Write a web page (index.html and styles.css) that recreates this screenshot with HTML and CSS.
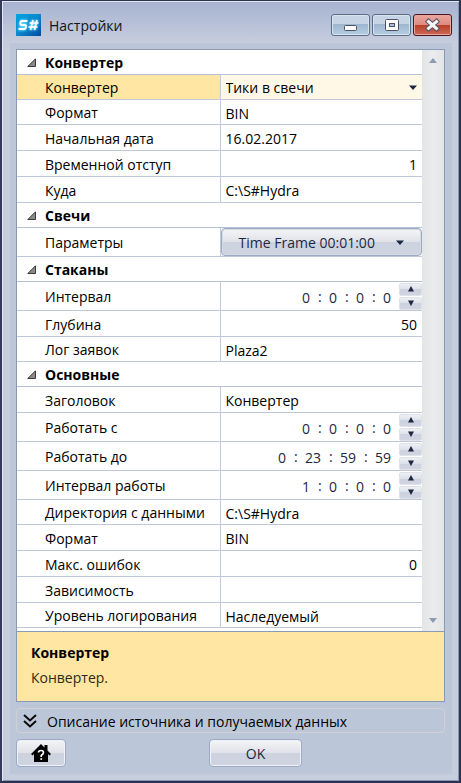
FILE: index.html
```html
<!DOCTYPE html>
<html lang="ru">
<head>
<meta charset="utf-8">
<meta name="viewport" content="width=device-width, initial-scale=1">
<title>Настройки</title>
<link rel="stylesheet" href="styles.css">
</head>
<body>
<div class="window">
  <header class="titlebar">
    <svg class="logo" viewBox="0 0 25 22" aria-hidden="true">
      <defs><linearGradient id="lg" x1="0" y1="0" x2="1" y2="1"><stop offset="0" stop-color="#00a5e3"/><stop offset=".5" stop-color="#0b86cc"/><stop offset="1" stop-color="#004a9c"/></linearGradient>
      <filter id="glow" x="-20%" y="-40%" width="140%" height="180%"><feGaussianBlur stdDeviation="1"/></filter></defs>
      <rect width="25" height="22" fill="url(#lg)"/>
      <g fill="none" stroke="#6fdcff" stroke-width="3" filter="url(#glow)"><path d="M11 7H5.500L4.500 11H9.500L8.500 15H2.500M14 9H22M13 13H21M17 6L14.500 16M21 6L18.500 16"/></g>
      <path fill="none" stroke="#fff" stroke-width="1.800" d="M11.500 7H6Q4.500 7 4.300 9T5.800 11H9Q10.300 11 10 13T8 15H2.500"/>
      <path fill="none" stroke="#fff" stroke-width="1.600" d="M13.500 9H22.500M12.500 13H21.500M17 6L14.500 16M21 6L18.500 16"/>
    </svg>
    <h1 class="title">Настройки</h1>
    <div class="captions">
      <button class="caption" aria-label="Свернуть"><svg viewBox="0 0 37 20"><rect x="12.500" y="10.500" width="12" height="5" rx="1" fill="#fafafa" stroke="#4d5161"/></svg></button>
      <button class="caption" aria-label="Развернуть"><svg viewBox="0 0 37 20"><rect x="12.500" y="4.500" width="13" height="11" rx="1" fill="#fafafa" stroke="#4d5161"/><rect x="16.500" y="8.500" width="5" height="3" fill="#a9c1d9" stroke="#4d5161"/></svg></button>
      <button class="caption close" aria-label="Закрыть"><svg viewBox="0 0 37 20"><path d="M14.500 6.500L22.500 13.500M22.500 6.500L14.500 13.500" stroke="#505365" stroke-width="5" stroke-linecap="square"/><path d="M14.500 6.500L22.500 13.500M22.500 6.500L14.500 13.500" stroke="#f6f6f6" stroke-width="3" stroke-linecap="square"/></svg></button>
    </div>
  </header>
  <main class="client">
    <section class="panel">
      <div class="viewport">
        <div class="grid">
          <button class="group" aria-expanded="true"><svg class="tri" viewBox="0 0 9 9"><path d="M8.500 .8V8.500H.8Z" fill="#8a8a8a" stroke="#3a3a3a"/></svg>Конвертер</button>
          <div class="row selected"><label for="conv">Конвертер</label><div class="value"><select id="conv" class="field"><option>Тики в свечи</option></select><svg class="drop" viewBox="0 0 8 5"><path d="M0 .5H8L4 5Z" fill="#1e2742"/></svg></div></div>
          <div class="row"><label for="fmt">Формат</label><div class="value"><input id="fmt" class="field" value="BIN"></div></div>
          <div class="row tall"><label for="date">Начальная дата</label><div class="value"><input id="date" class="field" value="16.02.2017"></div></div>
          <div class="row tall"><label for="shift">Временной отступ</label><div class="value"><input id="shift" class="field number" value="1"></div></div>
          <div class="row tall"><label for="dest">Куда</label><div class="value"><input id="dest" class="field" value="C:\S#Hydra"></div></div>
          <button class="group" aria-expanded="true"><svg class="tri" viewBox="0 0 9 9"><path d="M8.500 .8V8.500H.8Z" fill="#8a8a8a" stroke="#3a3a3a"/></svg>Свечи</button>
          <div class="row spin"><label for="params">Параметры</label><div class="value wide"><button id="params" class="button params">Time Frame 00:01:00<svg class="arrow" viewBox="0 0 8 5"><path d="M0 .5H8L4 5Z" fill="#1e2742"/></svg></button></div></div>
          <button class="group" aria-expanded="true"><svg class="tri" viewBox="0 0 9 9"><path d="M8.500 .8V8.500H.8Z" fill="#8a8a8a" stroke="#3a3a3a"/></svg>Стаканы</button>
          <div class="row spin"><label for="int">Интервал</label><div class="value time"><input id="int" class="part" value="0"><span>:</span><input class="part" aria-label="Часы" value="0"><span>:</span><input class="part" aria-label="Минуты" value="0"><span>:</span><input class="part" aria-label="Секунды" value="0"><div class="steps"><button class="step" aria-label="Больше"><svg viewBox="0 0 6 6"><path d="M0 5.500L3 0L6 5.500Z"/></svg></button><button class="step" aria-label="Меньше"><svg viewBox="0 0 6 6"><path d="M0 .5L3 6L6 .5Z"/></svg></button></div></div></div>
          <div class="row tall"><label for="depth">Глубина</label><div class="value"><input id="depth" class="field number" value="50"></div></div>
          <div class="row"><label for="log">Лог заявок</label><div class="value"><input id="log" class="field" value="Plaza2"></div></div>
          <button class="group" aria-expanded="true"><svg class="tri" viewBox="0 0 9 9"><path d="M8.500 .8V8.500H.8Z" fill="#8a8a8a" stroke="#3a3a3a"/></svg>Основные</button>
          <div class="row tall"><label for="head">Заголовок</label><div class="value"><input id="head" class="field" value="Конвертер"></div></div>
          <div class="row spin"><label for="from">Работать с</label><div class="value time"><input id="from" class="part" value="0"><span>:</span><input class="part" aria-label="Часы" value="0"><span>:</span><input class="part" aria-label="Минуты" value="0"><span>:</span><input class="part" aria-label="Секунды" value="0"><div class="steps"><button class="step" aria-label="Больше"><svg viewBox="0 0 6 6"><path d="M0 5.500L3 0L6 5.500Z"/></svg></button><button class="step" aria-label="Меньше"><svg viewBox="0 0 6 6"><path d="M0 .5L3 6L6 .5Z"/></svg></button></div></div></div>
          <div class="row spin"><label for="till">Работать до</label><div class="value time"><input id="till" class="part" value="0"><span>:</span><input class="part double" aria-label="Часы" value="23"><span>:</span><input class="part double" aria-label="Минуты" value="59"><span>:</span><input class="part double" aria-label="Секунды" value="59"><div class="steps"><button class="step" aria-label="Больше"><svg viewBox="0 0 6 6"><path d="M0 5.500L3 0L6 5.500Z"/></svg></button><button class="step" aria-label="Меньше"><svg viewBox="0 0 6 6"><path d="M0 .5L3 6L6 .5Z"/></svg></button></div></div></div>
          <div class="row spin"><label for="work">Интервал работы</label><div class="value time"><input id="work" class="part" value="1"><span>:</span><input class="part" aria-label="Часы" value="0"><span>:</span><input class="part" aria-label="Минуты" value="0"><span>:</span><input class="part" aria-label="Секунды" value="0"><div class="steps"><button class="step" aria-label="Больше"><svg viewBox="0 0 6 6"><path d="M0 5.500L3 0L6 5.500Z"/></svg></button><button class="step" aria-label="Меньше"><svg viewBox="0 0 6 6"><path d="M0 .5L3 6L6 .5Z"/></svg></button></div></div></div>
          <div class="row"><label for="dir">Директория с данными</label><div class="value"><input id="dir" class="field" value="C:\S#Hydra"></div></div>
          <div class="row tall"><label for="fmt2">Формат</label><div class="value"><input id="fmt2" class="field" value="BIN"></div></div>
          <div class="row tall"><label for="err">Макс. ошибок</label><div class="value"><input id="err" class="field number" value="0"></div></div>
          <div class="row tall"><label for="dep">Зависимость</label><div class="value"><input id="dep" class="field" value=""></div></div>
          <div class="row"><label for="level">Уровень логирования</label><div class="value"><input id="level" class="field" value="Наследуемый"></div></div>
        </div>
        <div class="scrollbar"><svg viewBox="0 0 8 5"><path d="M0 5L4 0L8 5Z"/></svg><svg viewBox="0 0 8 5"><path d="M0 0H8L4 5Z"/></svg></div>
      </div>
      <div class="help">
        <h2>Конвертер</h2>
        <p>Конвертер.</p>
      </div>
    </section>
    <button class="expander" aria-expanded="false"><svg viewBox="0 0 14 14"><path d="M1 1L7 6.500L13 1M1 7L7 12.500L13 7" fill="none" stroke="#0a0a0a" stroke-width="2"/></svg>Описание источника и получаемых данных</button>
    <footer class="actions">
      <button class="button home" aria-label="Справка"><svg viewBox="0 0 20 18"><path d="M0 10L10 0L13.500 3.500V1H16.500V6.500L20 10L18.500 11.500L17 10V18H3V10L1.500 11.500Z" fill="#000"/><path d="M7.500 8.500Q7.500 6.500 10 6.500T12.500 8.500Q12.500 10 10.200 11.500V13" fill="none" stroke="#fff" stroke-width="1.600"/><rect x="9.400" y="14.200" width="1.700" height="1.700" fill="#fff"/></svg></button>
      <button class="button ok">OK</button>
    </footer>
  </main>
</div>
</body>
</html>
```
FILE: styles.css
```css
* { box-sizing: border-box; }
body { margin: 0; font: 14px/20px "Segoe UI", "Open Sans", "Noto Sans", sans-serif; color: #000; }
button, input, select { font: inherit; color: inherit; margin: 0; padding: 0; border: 0; background: none; border-radius: 0; }
svg { display: block; flex: none; }

.window {
  min-height: 100vh;
  display: flex;
  flex-direction: column;
  padding: 0 7px 7px 8px;
  border: 2px solid #2a3350;
  border-top-width: 1px;
  border-left-color: #343b58;
  background: linear-gradient(#a6b2d0, #c6cddd 42px);
  box-shadow: inset 1px 1px #e2e6ef, inset -1px -1px #8695b5;
}

.titlebar { display: flex; align-items: center; height: 42px; padding: 6px 0 0 6px; gap: 8px; }
.logo { width: 25px; height: 22px; }
.title { flex: 1; margin: 0; padding-top: 2px; font-size: 14px; font-weight: 400; color: #10131c; }
.captions { display: flex; gap: 2px; }
.caption {
  width: 39px;
  height: 22px;
  border: 1px solid #5b6d88;
  border-radius: 3px;
  background: linear-gradient(#c7d4e5 45%, #9db6cf 45%, #b5cde0);
  box-shadow: inset 0 0 0 1px #d9e4ef;
}
.caption svg { width: 37px; height: 20px; }
.caption.close {
  border-color: #4b1420;
  background: linear-gradient(#eaa89e, #de8b80 48%, #b93c25 48%, #cc6a55);
  box-shadow: inset 0 0 0 1px #e8a79c;
}

.client { flex: 1; display: flex; flex-direction: column; padding: 6px 7px 7px 6px; background: #bbc7d8; }
.panel { flex: 1; display: flex; flex-direction: column; border: 1px solid #8b9ab3; background: #fff; }
.viewport { display: flex; }
.grid { flex: 1; min-width: 0; padding-bottom: 3px; }

.group {
  display: flex;
  align-items: center;
  width: 100%;
  height: 25px;
  padding: 2px 0 0 10px;
  gap: 9px;
  border-bottom: 1px solid #b8c0d6;
  font-weight: 700;
}
.tri { width: 9px; height: 9px; margin-bottom: 2px; }

.row { display: grid; grid-template-columns: 1fr 1fr; height: 25px; border-bottom: 1px solid #bfc7d9; }
.tall { height: 26px; }
.spin { height: 29px; }
.row label { display: flex; align-items: center; padding: 2px 0 0 28px; white-space: nowrap; }
.value { display: flex; align-items: center; min-width: 0; padding: 0 5px; border-left: 1px solid #c3cada; }
.field { flex: 1; min-width: 0; width: 100%; height: 22px; padding-top: 2px; outline: 0; appearance: none; }
.number { text-align: right; }
.selected label { background: #ffe6a2; }
.selected .value { background: #fff8e7; }
.drop { width: 8px; height: 5px; }

.time { justify-content: flex-end; gap: 8px; padding: 0; color: #1e2742; }
.time span { width: 3px; padding-top: 2px; text-align: center; }
.part { width: 8px; height: 22px; padding-top: 2px; outline: 0; text-align: right; }
.double { width: 16px; }
.steps { display: flex; flex-direction: column; gap: 1px; width: 23px; }
.step {
  display: grid;
  place-items: center;
  height: 13px;
  border: 1px solid #dfe2ea;
  border-radius: 2px;
  background: linear-gradient(#eef0f4, #dde0e9 50%, #cdd2de 50%, #d0d5e1);
}
.step svg { width: 6px; height: 6px; fill: #1e2742; }

.button {
  display: flex;
  align-items: center;
  justify-content: center;
  height: 28px;
  padding-top: 2px;
  border: 1px solid #9daac3;
  border-radius: 4px;
  background: linear-gradient(#f4f5f7, #dfe2e8 50%, #cdd2df 50%, #cfd4e1);
  box-shadow: inset 0 0 0 1px #f0f2f6;
  color: #1e2742;
}
.wide { padding: 0; }
.params { flex: 1; gap: 21px; box-shadow: inset 0 0 0 1px #d5dae5; }
.arrow { width: 8px; height: 5px; margin-bottom: 2px; }

.scrollbar {
  display: flex;
  flex-direction: column;
  align-items: center;
  justify-content: space-between;
  width: 22px;
  padding: 8px 0;
  background: linear-gradient(90deg, #e3e4e6, #ebecee 50%, #e3e4e6);
}
.scrollbar svg { width: 8px; height: 5px; fill: #8d9ab4; }

.help { flex: 1; padding: 11px 14px; border-top: 1px solid #8b9ab3; background: #ffe6a2; }
.help h2 { margin: 0 0 5px; font-size: 14px; font-weight: 700; }
.help p { margin: 0; color: #2b2a20; }

.expander {
  display: flex;
  align-items: center;
  height: 25px;
  margin-top: 6px;
  padding: 2px 0 0 6px;
  gap: 10px;
  border: 1px solid #d2d1d2;
  border-radius: 4px;
  white-space: nowrap;
}
.expander svg { width: 14px; height: 14px; margin-bottom: 2px; }

.actions { display: grid; grid-template-columns: auto 1fr; align-items: center; margin-top: 6px; }
.home { width: 50px; padding: 0; }
.home svg { width: 20px; height: 18px; }
.ok { width: 93px; justify-self: center; }
```
